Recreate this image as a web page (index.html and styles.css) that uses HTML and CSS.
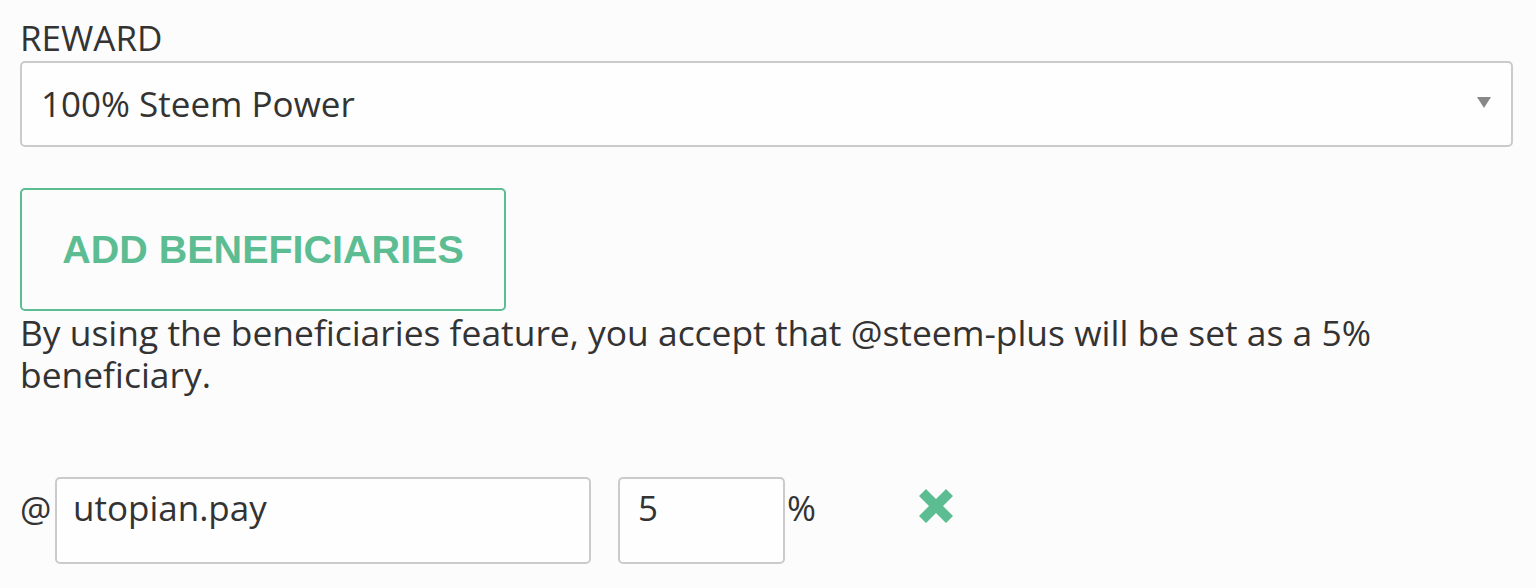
FILE: index.html
```html
<!DOCTYPE html>
<html>
<head>
<meta charset="utf-8">
<link rel="stylesheet" href="styles.css">
</head>
<body>
<div class="form">
  <div class="label">REWARD</div>
  <div class="select">
    <span class="select-value">100% Steem Power</span>
    <svg class="caret" width="14" height="11" viewBox="0 0 14 11"><polygon points="0,0 14,0 7,11" fill="#888"/></svg>
  </div>
  <button class="btn">ADD BENEFICIARIES</button>
  <p class="note">By using the beneficiaries feature, you accept that @steem-plus will be set as a 5% beneficiary.</p>
  <div class="row">
    <span class="at">@</span>
    <div class="input name">utopian.pay</div>
    <div class="input pct">5</div>
    <span class="percent">%</span>
    <svg class="remove" width="34" height="34" viewBox="0 0 34 34"><polygon fill="#5cbd93" points="0,7 7,0 17,10 27,0 34,7 24,17 34,27 27,34 17,24 7,34 0,27 10,17"/></svg>
  </div>
</div>
</body>
</html>
```
FILE: styles.css
```css
html, body {
  margin: 0;
  padding: 0;
  background: #fcfcfc;
}
body {
  font-family: "Open Sans", "Noto Sans", sans-serif;
  color: #333;
}
.form {
  padding: 18px 23px 0 20px;
  display: flex;
  flex-direction: column;
  align-items: flex-start;
}
.label {
  font-size: 35px;
  line-height: 40px;
}
.select {
  box-sizing: border-box;
  margin-top: 3px;
  width: 100%;
  height: 86px;
  border: 2px solid #cbcbcb;
  border-radius: 5px;
  background: #fefefe;
  display: flex;
  align-items: center;
  justify-content: space-between;
  padding: 0 20px 0 19px;
}
.select-value {
  font-size: 35px;
  line-height: 40px;
}
.caret {
  margin-top: -3px;
}
.btn {
  box-sizing: border-box;
  margin-top: 41px;
  width: 486px;
  height: 123px;
  border: 2px solid #5cbd93;
  border-radius: 5px;
  background: transparent;
  color: #5cbd93;
  font-family: "Liberation Sans", Arial, sans-serif;
  font-weight: bold;
  font-size: 39.5px;
  padding: 0;
}
.note {
  margin: 0;
  font-size: 35.4px;
  line-height: 42px;
  max-width: 1493px;
}
.row {
  margin-top: 82px;
  display: flex;
  align-items: flex-start;
}
.at {
  font-size: 35px;
  line-height: 40px;
  margin-top: 12px;
  width: 35px;
}
.input {
  box-sizing: border-box;
  height: 87px;
  border: 2px solid #cbcbcb;
  border-radius: 5px;
  background: #fefefe;
  font-size: 35px;
  line-height: 40px;
  padding: 9px 16px 0 16px;
}
.name {
  width: 536px;
}
.pct {
  margin-left: 27px;
  width: 167px;
  padding-left: 18px;
}
.percent {
  font-size: 35px;
  line-height: 40px;
  margin-top: 11px;
  margin-left: 2px;
}
.remove {
  margin-left: 103px;
  margin-top: 12px;
}
```
